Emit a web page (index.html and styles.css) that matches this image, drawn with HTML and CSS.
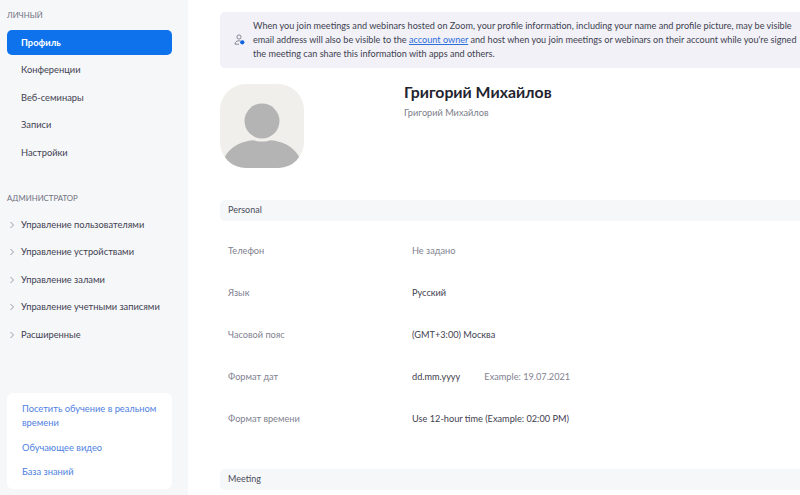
FILE: index.html
```html
<!DOCTYPE html>
<html lang="ru">
<head>
<meta charset="utf-8">
<title>Профиль</title>
<link rel="stylesheet" href="styles.css">
</head>
<body>
<div class="page">
  <aside class="sidebar">
    <div class="group-title first">ЛИЧНЫЙ</div>
    <nav class="menu">
      <a class="item active">Профиль</a>
      <a class="item">Конференции</a>
      <a class="item">Веб-семинары</a>
      <a class="item">Записи</a>
      <a class="item">Настройки</a>
    </nav>
    <div class="group-title admin">АДМИНИСТРАТОР</div>
    <nav class="menu">
      <a class="item"><svg class="chev" viewBox="0 0 6 8"><path d="M1.5 1l3 3-3 3"/></svg>Управление пользователями</a>
      <a class="item"><svg class="chev" viewBox="0 0 6 8"><path d="M1.5 1l3 3-3 3"/></svg>Управление устройствами</a>
      <a class="item"><svg class="chev" viewBox="0 0 6 8"><path d="M1.5 1l3 3-3 3"/></svg>Управление залами</a>
      <a class="item"><svg class="chev" viewBox="0 0 6 8"><path d="M1.5 1l3 3-3 3"/></svg>Управление учетными записями</a>
      <a class="item"><svg class="chev" viewBox="0 0 6 8"><path d="M1.5 1l3 3-3 3"/></svg>Расширенные</a>
    </nav>
    <div class="help">
      <a>Посетить обучение в реальном времени</a>
      <a>Обучающее видео</a>
      <a>База знаний</a>
    </div>
  </aside>
  <main class="content">
    <div class="notice">
      <svg class="notice-icon" viewBox="0 0 12 12">
        <circle cx="5" cy="3" r="2.1"/>
        <path d="M1 10.2c0-2.4 1.6-3.4 4-3.4 .6 0 1.100 .1 1.600 .2M1 10.200h4"/>
        <circle class="dot" cx="8.300" cy="8.300" r="2.100"/>
      </svg>
      <p>When you join meetings and webinars hosted on Zoom, your profile information, including your name and profile picture, may be visible<br>email address will also be visible to the <a>account owner</a> and host when you join meetings or webinars on their account while you're signed<br>the meeting can share this information with apps and others.</p>
    </div>
    <section class="identity">
      <svg class="avatar" viewBox="0 0 84 84">
        <circle cx="42" cy="37" r="17.500"/>
        <path d="M4.500 73.500C10 62 24 56.500 34 56.300c2.500 1.700 13.500 1.700 16 0C60 56.500 74 62 79.500 73.500 75 80.500 68 84 60 84H24C16 84 9 80.500 4.500 73.500z"/>
      </svg>
      <div class="names">
        <h1>Григорий Михайлов</h1>
        <div class="sub">Григорий Михайлов</div>
      </div>
    </section>
    <div class="section-bar">Personal</div>
    <dl class="rows">
      <div class="row"><dt>Телефон</dt><dd class="muted">Не задано</dd></div>
      <div class="row"><dt>Язык</dt><dd>Русский</dd></div>
      <div class="row"><dt>Часовой пояс</dt><dd>(GMT+3:00) Москва</dd></div>
      <div class="row"><dt>Формат дат</dt><dd>dd.mm.yyyy<span class="example">Example: 19.07.2021</span></dd></div>
      <div class="row"><dt>Формат времени</dt><dd>Use 12-hour time (Example: 02:00 PM)</dd></div>
    </dl>
    <div class="section-bar meeting">Meeting</div>
  </main>
</div>
</body>
</html>
```
FILE: styles.css
```css
* { box-sizing: border-box; }
html, body { margin: 0; height: 100%; overflow: hidden; background: #fff; }
body { font-family: Lato, "Noto Sans", "Liberation Sans", sans-serif; font-size: 10px; color: #3f4150; }
.page { display: flex; width: 800px; height: 495px; overflow: hidden; }

.sidebar { flex: 0 0 188px; height: 495px; background: #f6f7f9; display: flex; flex-direction: column; padding: 0 16px 0 7px; }
.group-title { font-size: 7.800px; color: #6e7180; line-height: 12px; }
.group-title.first { padding-top: 9px; margin-bottom: 9px; }
.group-title.admin { margin-top: 26.500px; margin-bottom: 8.500px; }
.menu { display: flex; flex-direction: column; gap: 2.500px; }
.item { display: flex; align-items: center; height: 25px; padding: 0 0 1px 14px; position: relative; font-size: 9.300px; color: #3f4150; border-radius: 5px; white-space: nowrap; }
.item.active { background: #0e72ed; color: #fff; font-weight: 700; }
.chev { position: absolute; left: 2px; top: 8.500px; width: 6px; height: 8px; fill: none; stroke: #9a9ca8; stroke-width: 1; }
.help { margin-top: auto; margin-bottom: 6px; background: #fff; border-radius: 6px; padding: 9px 8px 10px 15px; display: flex; flex-direction: column; gap: 10.500px; }
.help a { color: #4f7fe0; font-size: 9.300px; line-height: 14px; }

.content { flex: 0 0 640px; padding: 12px 0 0 32px; margin-right: -60px; }
.notice { height: 56px; display: flex; align-items: center; background: #f1f1f7; border-radius: 5px; padding-left: 14px; overflow: hidden; }
.notice-icon { flex: none; width: 12px; height: 12px; margin-right: 7px; fill: none; stroke: #6e7180; stroke-width: .8; }
.notice-icon .dot { fill: #0e62e0; stroke: none; }
.notice p { margin: 0; font-size: 9.120px; line-height: 14px; white-space: nowrap; color: #3f4150; }
.notice a { color: #2d6fdb; text-decoration: underline; }

.identity { display: flex; margin-top: 16px; height: 84px; }
.avatar { flex: none; width: 84px; height: 84px; border-radius: 26px; background: #f0efeb; fill: #b4b4b4; }
.names { margin-left: 100px; }
h1 { margin: 0; font-size: 15.800px; line-height: 16px; font-weight: 700; color: #23242f; }
.sub { margin-top: 7px; font-size: 9.200px; line-height: 12px; color: #7b7d8a; }

.section-bar { height: 21px; margin-top: 32px; line-height: 20px; padding-left: 8px; background: #f6f7f9; border-radius: 5px; font-size: 9px; color: #4a4c5a; }
.section-bar.meeting { margin-top: 30px; }
.rows { margin: 8px 0 0; }
.row { display: flex; align-items: center; height: 42px; margin: 0; }
dt { flex: 0 0 192px; padding-left: 8px; font-size: 9.200px; color: #7f8190; }
dd { margin: 0; font-size: 9.200px; color: #3f4150; white-space: nowrap; }
dd.muted { color: #7f8190; }
.example { margin-left: 24px; color: #7f8190; }
```
